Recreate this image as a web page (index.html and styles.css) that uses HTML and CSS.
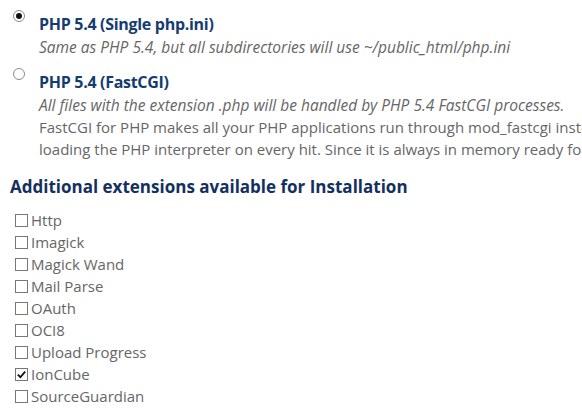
FILE: index.html
```html
<!DOCTYPE html>
<html>
<head>
<meta charset="utf-8">
<link rel="stylesheet" href="styles.css">
</head>
<body>
<div class="page">
  <div class="options">
    <div class="option">
      <span class="radio checked"></span>
      <div class="opt-body">
        <div class="opt-title">PHP 5.4 (Single php.ini)</div>
        <div class="opt-desc">Same as PHP 5.4, but all subdirectories will use ~/public_html/php.ini</div>
      </div>
    </div>
    <div class="option">
      <span class="radio"></span>
      <div class="opt-body">
        <div class="opt-title">PHP 5.4 (FastCGI)</div>
        <div class="opt-desc">All files with the extension .php will be handled by PHP 5.4 FastCGI processes.</div>
        <div class="opt-text">FastCGI for PHP makes all your PHP applications run through mod_fastcgi inste</div>
        <div class="opt-text">loading the PHP interpreter on every hit. Since it is always in memory ready for</div>
      </div>
    </div>
  </div>
  <h2 class="heading">Additional extensions available for Installation</h2>
  <ul class="exts">
    <li><span class="cb"></span>Http</li>
    <li><span class="cb"></span>Imagick</li>
    <li><span class="cb"></span>Magick Wand</li>
    <li><span class="cb"></span>Mail Parse</li>
    <li><span class="cb"></span>OAuth</li>
    <li><span class="cb"></span>OCI8</li>
    <li><span class="cb"></span>Upload Progress</li>
    <li><span class="cb checked"><svg viewBox="0 0 12 12" width="11" height="11"><path d="M2 6.2 L4.8 9 L10 2.8" fill="none" stroke="#111" stroke-width="2"/></svg></span>IonCube</li>
    <li><span class="cb"></span>SourceGuardian</li>
  </ul>
</div>
</body>
</html>
```
FILE: styles.css
```css
html, body {
  margin: 0;
  padding: 0;
  background: #fff;
}
.page {
  font-family: "Open Sans", "Noto Sans", sans-serif;
  color: #666;
  width: 582px;
  height: 419px;
  overflow: hidden;
  white-space: nowrap;
}
.options {
  display: flex;
  flex-direction: column;
  gap: 12px;
  padding: 12px 0 0 13px;
}
.option {
  display: flex;
  align-items: flex-start;
}
.radio {
  width: 10px;
  height: 10px;
  border: 1px solid #8a8a8a;
  border-radius: 50%;
  margin-top: -2px;
  flex: none;
  display: flex;
  align-items: center;
  justify-content: center;
  background: #fff;
}
.radio.checked::after {
  content: "";
  width: 6px;
  height: 6px;
  border-radius: 50%;
  background: #111;
}
.opt-body {
  margin-left: 14px;
}
.opt-title {
  font-size: 16px;
  letter-spacing: -0.3px;
  font-weight: 700;
  color: #153c71;
  line-height: 24px;
}
.opt-desc {
  font-size: 15.5px;
  font-style: italic;
  color: #666;
  line-height: 22px;
}
.opt-text {
  font-size: 15px;
  color: #666;
  line-height: 22px;
}
.heading {
  margin: 15px 0 0 10px;
  font-size: 17px;
  font-weight: 700;
  color: #14305e;
  line-height: 24px;
}
.exts {
  list-style: none;
  margin: 10px 0 0 15px;
  padding: 0;
}
.exts li {
  display: flex;
  align-items: center;
  font-size: 15px;
  line-height: 22px;
  color: #666;
}
.cb {
  width: 11px;
  height: 11px;
  border: 1px solid #777;
  margin-right: 3px;
  display: flex;
  align-items: center;
  justify-content: center;
  flex: none;
}
```
